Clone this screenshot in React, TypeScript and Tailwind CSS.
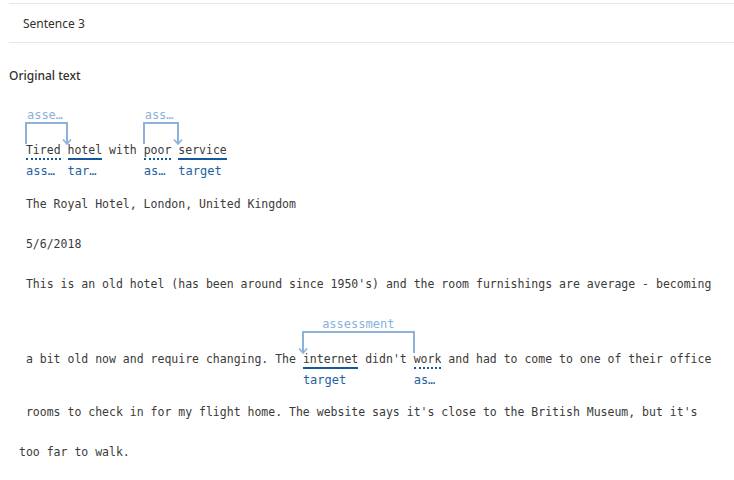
import React from "react";

function Word({
  text,
  label,
  kind,
  children,
}: {
  text: string;
  label: string;
  kind: "target" | "assessment";
  children?: React.ReactNode;
}) {
  return (
    <span className="relative inline-block">
      {text}
      <span
        className={
          kind === "target"
            ? "absolute left-0 right-0 top-[18px] border-b-2 border-solid border-[#14579b]"
            : "absolute left-0 right-0 top-[18px] border-b-2 border-dotted border-[#14579b]"
        }
      />
      <span className="absolute left-0 right-0 top-[24px] truncate text-[12px] leading-[14px] text-[#1f5f9f]">
        {label}
      </span>
      {children}
    </span>
  );
}

function Arc({ className, label, arrow }: { className: string; label: string; arrow: "left" | "right" }) {
  return (
    <span className={"absolute bottom-[16px] h-[22px] border-x-2 border-t-2 border-[#8cb2da] " + className}>
      <span className="absolute left-0 right-0 bottom-[calc(100%+2px)] truncate text-center text-[12px] leading-[14px] text-[#8cb2da]">
        {label}
      </span>
      <svg
        className={arrow === "right" ? "absolute -right-[6px] -bottom-[1px]" : "absolute -left-[6px] -bottom-[1px]"}
        width="10"
        height="6"
        viewBox="0 0 10 6"
      >
        <polyline points="1,0.5 5,5 9,0.5" fill="none" stroke="#8cb2da" strokeWidth="1.6" />
      </svg>
    </span>
  );
}

export default function App() {
  return (
    <div className="h-[480px] w-[734px] overflow-hidden bg-white font-['Segoe_UI','Noto_Sans',sans-serif] text-[#323130]">
      <div className="ml-[9px] mt-[3px] flex h-[40px] items-center border-y border-[#e6e6e6] pl-[14px] pt-[2px] text-[12px]">
        Sentence 3
      </div>
      <div className="ml-[9px] mt-[23px] text-[12px] font-medium leading-[20px]">Original text</div>

      <div className="whitespace-pre pl-[19px] font-['DejaVu_Sans_Mono',monospace] text-[11.5px] text-[#3b3a39]">
        <div className="pb-[24px] pt-[54px] leading-[20px]">
          {" "}
          <Word text="Tired" label="assessment" kind="assessment">
            <Arc className="-left-px w-[calc(6ch+2px)]" label="assessment" arrow="right" />
          </Word>
          {" "}
          <Word text="hotel" label="target" kind="target" />
          {" with "}
          <Word text="poor" label="assessment" kind="assessment">
            <Arc className="-left-px w-[calc(5ch+2px)]" label="assessment" arrow="right" />
          </Word>
          {" "}
          <Word text="service" label="target" kind="target" />
        </div>

        <div className="leading-[40px]"> The Royal Hotel, London, United Kingdom</div>
        <div className="leading-[40px]"> 5/6/2018</div>
        <div className="leading-[40px]">
          {" This is an old hotel (has been around since 1950's) and the room furnishings are average - becoming"}
        </div>

        <div className="pb-[23px] pt-[45px] leading-[20px]">
          {" a bit old now and require changing. The "}
          <Word text="internet" label="target" kind="target">
            <Arc className="-left-px w-[calc(16ch+2px)]" label="assessment" arrow="left" />
          </Word>
          {" didn't "}
          <Word text="work" label="assessment" kind="assessment" />
          {" and had to come to one of their office"}
        </div>

        <div className="leading-[40px]">
          {" rooms to check in for my flight home. The website says it's close to the British Museum, but it's"}
        </div>
        <div className="leading-[40px]">too far to walk.</div>
      </div>
    </div>
  );
}
